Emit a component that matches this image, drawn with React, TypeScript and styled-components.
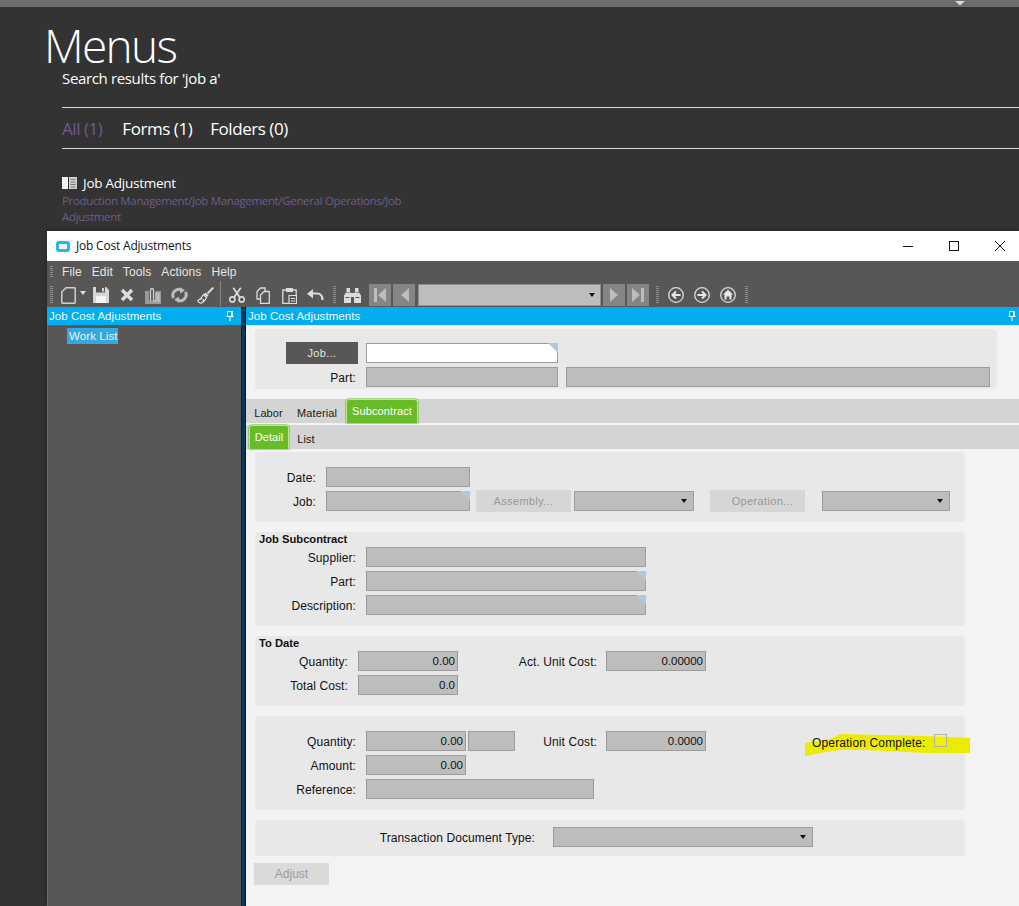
import React from 'react';
import styled, { createGlobalStyle } from 'styled-components';

const Global = createGlobalStyle`
  html, body { margin: 0; padding: 0; background: #333333; height: 906px; overflow: hidden; }
  #root { width: 1019px; height: 906px; overflow: hidden; }
`;

const Page = styled.div`
  width: 1019px; height: 906px; display: flex; flex-direction: column;
  background: #333333; font-family: "Open Sans", "Noto Sans", sans-serif; color: #fff; overflow: hidden;
`;
const TopBar = styled.div`height: 7px; background: #6b6e6e; flex: none; padding-left: 954px; box-sizing: border-box; line-height: 0;`;
const MenuPage = styled.div`height: 224px; flex: none; padding-left: 44px; box-sizing: border-box;`;
const Title = styled.h1`
  margin: 0; height: 61px; box-sizing: border-box; padding-top: 15px; font-size: 46px; line-height: 46px; font-weight: 300; letter-spacing: -1.7px;
`;
const Results = styled.div`padding-left: 18px;`;
const Subtitle = styled.div`font-size: 15px; line-height: 20px; height: 29px; letter-spacing: -0.35px;`;
const Filters = styled.div`
  margin-top: 10px; height: 42px; display: flex; gap: 20px; align-items: center; box-sizing: border-box;
  border-top: 1px solid #d9d9d9; border-bottom: 1px solid #d9d9d9;
  font-size: 17px; letter-spacing: -0.45px;
`;
const Filter = styled.span<{ $active?: boolean; $tight?: boolean }>`
  color: ${p => (p.$active ? '#6f5b8c' : '#fff')};
  margin-left: ${p => (p.$tight ? -2 : 0)}px;
`;
const Result = styled.div`margin-top: 24px; width: 345px;`;
const ResultName = styled.div`display: flex; align-items: center; gap: 6px; font-size: 13.5px; line-height: 20px; letter-spacing: -0.25px;`;
const ResultPath = styled.div`font-size: 11.5px; line-height: 16px; color: #6f5b8c; letter-spacing: -0.34px;`;

const Win = styled.div`
  margin-left: 47px; flex: 1; min-height: 0; display: flex; flex-direction: column;
  font-family: "Liberation Sans", Arial, sans-serif; font-size: 12px; color: #111;
  box-shadow: 0 0 7px rgba(0, 0, 0, 0.28);
`;
const TitleBar = styled.div`height: 30px; flex: none; background: #fff; display: flex; align-items: center; padding-left: 9px; margin-right: -4px;`;
const TitleText = styled.div`margin: -2px 0 0 6px; flex: 1; font-family: "Open Sans", sans-serif; font-size: 12px; letter-spacing: -0.2px; color: #111;`;
const WinButton = styled.div`width: 46px; height: 30px; display: flex; align-items: center; justify-content: center;`;
const MenuBar = styled.div`
  height: 22px; flex: none; background: #595755; display: flex; align-items: center; gap: 10px;
  color: #e6e6e6; padding-left: 3px;
`;
const Grip = styled.div<{ $h: number }>`
  width: 3px; height: ${p => p.$h}px; flex: none;
  background: repeating-linear-gradient(to bottom, #8f8d8b 0 1px, transparent 1px 2px);
`;
const MenuItem = styled.span<{ $first?: boolean }>`
  font-size: 12px; letter-spacing: 0.1px; margin-left: ${p => (p.$first ? -1 : 0)}px;
`;
const Toolbar = styled.div`height: 24px; flex: none; background: #595755; display: flex; align-items: center; padding-left: 3px;`;
const Tool = styled.div<{ $w?: number }>`
  width: ${p => p.$w ?? 26}px; height: 22px; flex: none; display: flex; align-items: center; justify-content: center;
`;
const Divider = styled.div`width: 1px; height: 25px; background: #8a8886; align-self: flex-start; margin-top: -2px; flex: none;`;
const Spacer = styled.div<{ $w: number }>`width: ${p => p.$w}px; flex: none;`;
const NavButton = styled.div`
  width: 22px; height: 22px; background: #868584; flex: none; display: flex; align-items: center; justify-content: center; margin-right: 2px;
`;
const NavCombo = styled.div`
  width: 183px; height: 22px; box-sizing: border-box; background: #bdbdbd; border: 1px solid #8f8f8f; flex: none;
  display: flex; align-items: center; justify-content: flex-end; padding-right: 5px; margin-right: 2px;
`;
const Arrow = styled.span<{ $light?: boolean }>`
  width: 0; height: 0; border-left: 3.5px solid transparent; border-right: 3.5px solid transparent;
  border-top: 4px solid ${p => (p.$light ? '#ddd' : '#111')}; display: block;
  margin-bottom: ${p => (p.$light ? 4 : 0)}px;
`;

const Dock = styled.div`flex: 1; min-height: 0; display: flex;`;
const LeftPane = styled.div`
  width: 194px; flex: none; display: flex; flex-direction: column;
  background: linear-gradient(to right, #6b6a68 0 1px, #595755 1px);
`;
const Gutter = styled.div`width: 5px; flex: none; background: linear-gradient(to right, #1c1c1c 0 1px, #063a5c 1px 4px, #0a0a0a 4px 5px);`;
const RightPane = styled.div`flex: 1; min-width: 0; background: #f3f3f6; display: flex; flex-direction: column;`;
const DockHeader = styled.div<{ $pr: number }>`
  height: 18px; flex: none; background: #00adef; color: #f4fbff; display: flex; align-items: center; justify-content: space-between;
  padding: 0 ${p => p.$pr}px 0 2px; font-size: 11.5px; letter-spacing: 0.05px;
`;
const WorkList = styled.div`margin: 3px 0 0 20px; background: #33a9e0; color: #f0f0f0; height: 16px; width: 51px; line-height: 16px; padding-left: 2px; box-sizing: border-box; font-size: 11.5px;letter-spacing: 0.1px; white-space: nowrap;`;

const Panel = styled.div<{ $w: number; $h: number; $top: number }>`
  width: ${p => p.$w}px; height: ${p => p.$h}px; margin: ${p => p.$top}px 0 0 9px; background: #e8e8e8;
  border-radius: 4px; box-sizing: border-box; flex: none; position: relative;
`;
const Strip = styled.div<{ $top: number }>`
  margin-top: ${p => p.$top}px; height: 24px; background: #d4d4d4; flex: none; display: flex; align-items: flex-end;
  padding-left: 3px;
`;
const Tab = styled.div<{ $active?: boolean; $w: number }>`
  width: ${p => p.$w}px; height: ${p => (p.$active ? 24 : 22)}px; box-sizing: border-box; display: flex; align-items: ${p => (p.$active ? 'flex-start' : 'center')}; justify-content: center;
  font-size: 11px; letter-spacing: 0.1px; padding-top: ${p => (p.$active ? 5 : 2)}px;
  color: ${p => (p.$active ? '#fff' : '#1a1a1a')};
  background: ${p => (p.$active ? '#68bc28' : 'transparent')};
  ${p => (p.$active ? 'border: 1px solid #b8ea8e; border-bottom: none; border-radius: 3px 3px 0 0; box-shadow: 0 0 0 0.5px #5fb521;' : '')}
`;
const Row = styled.div<{ $top: number }>`
  display: flex; align-items: center; height: 20px; margin-top: ${p => p.$top}px;
`;
const Label = styled.div<{ $w: number }>`
  width: ${p => p.$w}px; flex: none; text-align: right; padding: 2px 3px 0 0; box-sizing: border-box; color: #111; white-space: nowrap; letter-spacing: 0.1px;
`;
const Field = styled.div<{ $w: number; $white?: boolean; $corner?: boolean; $left?: number }>`
  width: ${p => p.$w}px; height: 20px; flex: none; box-sizing: border-box; margin-left: ${p => p.$left ?? 0}px;
  background: ${p => (p.$white ? '#fff' : '#bdbdbd')}; border: 1px solid #9c9c9c; position: relative;
  display: flex; align-items: center; justify-content: flex-end; padding: 0 2px 1px 0; font-size: 11.5px; color: #111;
  ${p => (p.$corner ? `&::after { content: ''; position: absolute; right: -1px; top: -1px; border-style: solid; border-width: 0 10px 10px 0; border-color: transparent #b1c6df transparent transparent; }` : '')}
`;
const Combo = styled(Field)`padding: 0 6px 0 0;`;
const Btn = styled.div<{ $w: number; $dark?: boolean; $left?: number; $shift?: number }>`
  width: ${p => p.$w}px; height: 22px; flex: none; margin-left: ${p => p.$left ?? 0}px; box-sizing: border-box;
  padding-left: ${p => p.$shift ?? 0}px;
  display: flex; align-items: center; justify-content: center; font-size: 11px; letter-spacing: 0.35px;
  background: ${p => (p.$dark ? '#595755' : '#d6d6d6')}; color: ${p => (p.$dark ? '#e4e4e4' : '#969696')};
`;
const Heading = styled.div`font-weight: bold; font-size: 11.2px; padding-left: 4px; color: #111; height: 15px; line-height: 14px;`;
const Highlight = styled.svg`position: absolute; left: 550px; top: 17px;`;
const OpLabel = styled.div`position: absolute; left: 557px; top: 20px; color: #111; white-space: nowrap; letter-spacing: 0.15px;`;
const Check = styled.div`position: absolute; left: 679px; top: 18px; width: 13px; height: 13px; box-sizing: border-box; border: 1px solid #b4b4a8; background: rgba(255, 255, 0, 0.35);`;
const AdjustBtn = styled(Btn)`margin: 7px 0 0 8px; background: #dadada; color: #9a9a9a; font-size: 12px; letter-spacing: 0;`;

const S = { fill: 'none', stroke: '#dcdcdc' };
const Icon: React.FC<{ children: React.ReactNode; w?: number; h?: number }> = ({ children, w = 18, h = 18 }) => (
  <svg width={w} height={h} viewBox={`0 0 ${w} ${h}`}>{children}</svg>
);

const Pin = () => (
  <svg width="8" height="10" viewBox="0 0 8 10">
    <path d="M1.5 .5h5v5h-5z M.5 5.500h7 M4 6v4" fill="none" stroke="#fff" strokeWidth="1" />
    <path d="M5 1h1.500v4.500H5z" fill="#fff" />
  </svg>
);

export default function App() {
  return (
    <Page>
      <Global />
      <TopBar>
        <svg width="12" height="5" viewBox="0 0 12 5"><path d="M1 0h10L6 4.500z" fill="#d8d8d8" /></svg>
      </TopBar>
      <MenuPage>
        <Title>Menus</Title>
        <Results>
          <Subtitle>Search results for 'job a'</Subtitle>
          <Filters>
            <Filter $active>All (1)</Filter>
            <Filter>Forms (1)</Filter>
            <Filter $tight>Folders (0)</Filter>
          </Filters>
          <Result>
            <ResultName>
              <svg width="15" height="12" viewBox="0 0 15 12">
                <path d="M0 0h6v12H0z" fill="#f2f2f2" />
                <path d="M7 0h8v12H7z" fill="#d0d0d0" />
                <path d="M8.500 2.500h5M8.500 5h5M8.500 7.500h5M8.500 10h5" stroke="#777" strokeWidth="1" />
              </svg>
              Job Adjustment
            </ResultName>
            <ResultPath>Production Management/Job Management/General Operations/Job Adjustment</ResultPath>
          </Result>
        </Results>
      </MenuPage>
      <Win>
        <TitleBar>
          <svg width="14" height="11" viewBox="0 0 14 11">
            <rect x="0" y="0" width="14" height="11" rx="3" fill="#29b6ea" />
            <rect x="3" y="3" width="8" height="5" rx="1" fill="#fff" />
          </svg>
          <TitleText>Job Cost Adjustments</TitleText>
          <WinButton>
            <svg width="10" height="10" viewBox="0 0 10 10"><path d="M0 5.500h10" stroke="#111" /></svg>
          </WinButton>
          <WinButton>
            <svg width="10" height="10" viewBox="0 0 10 10"><rect x=".5" y=".5" width="9" height="9" fill="none" stroke="#111" /></svg>
          </WinButton>
          <WinButton>
            <svg width="10" height="10" viewBox="0 0 10 10"><path d="M0 0l10 10M10 0L0 10" stroke="#111" /></svg>
          </WinButton>
        </TitleBar>
        <MenuBar>
          <Grip $h={12} />
          <MenuItem $first>File</MenuItem>
          <MenuItem>Edit</MenuItem>
          <MenuItem>Tools</MenuItem>
          <MenuItem>Actions</MenuItem>
          <MenuItem>Help</MenuItem>
        </MenuBar>
        <Toolbar>
          <Grip $h={18} />
          <Spacer $w={7} />
          <Tool $w={17}>
            <Icon w={15} h={17}>
              <path d="M5 .8h8.500a.7.7 0 0 1 .7.7v14a.7.7 0 0 1-.7.7H1.500a.7.7 0 0 1-.7-.7V5z" {...S} stroke="#cfcfcf" strokeWidth="1.500" />
            </Icon>
          </Tool>
          <Tool $w={11}><Arrow $light /></Tool>
          <Tool>
            <Icon w={16} h={16}>
              <path d="M0 0h13l3 3v13H0z" fill="#d6d6d6" />
              <path d="M3 0h9v5.500H3z" fill="#595755" />
              <path d="M9 1h2v3.500H9z" fill="#d6d6d6" />
              <path d="M3 9h10v7H3z" fill="#f4f4f4" />
            </Icon>
          </Tool>
          <Tool>
            <Icon w={14} h={14}><path d="M2 2l10 10M12 2L2 12" stroke="#dcdcdc" strokeWidth="3.400" /></Icon>
          </Tool>
          <Tool>
            <Icon w={16} h={17}>
              <path d="M0 4h16v13H0z" fill="#9a9a98" />
              <path d="M4 1.500h7v12H4z" fill="#595755" />
              <path d="M5.500 14V3a1.500 1.500 0 0 1 3 0v10a1.200 1.200 0 0 0 2.500 0V5" fill="none" stroke="#cfcfcf" strokeWidth="1.300" />
              <path d="M12.500 6h2v9h-2z" fill="#c4c4c4" />
            </Icon>
          </Tool>
          <Tool>
            <Icon w={17} h={16}>
              <path d="M2.500 11A6 6 0 0 1 10 2.700" fill="none" stroke="#bcbcbc" strokeWidth="3" />
              <path d="M14.500 5A6 6 0 0 1 7 13.300" fill="none" stroke="#bcbcbc" strokeWidth="3" />
              <path d="M9 0l5 3.500-5 3z M8 16l-5-3.500 5-3z" fill="#bcbcbc" />
            </Icon>
          </Tool>
          <Tool>
            <Icon w={17} h={17}>
              <path d="M16.300 .7L10.500 6.500" stroke="#e4e4e4" strokeWidth="1.800" />
              <path d="M8.500 5.500l3 3-1.500 1.500-3-3z" fill="#e4e4e4" />
              <path d="M6.500 7.500l3 3C8.500 13 6 15.500 3.500 16.300 2.300 15.800 1 14.500.7 13.500 3 12.500 5.200 10 6.500 7.500z M3.500 12.500l1.500-1.500M5.500 14l1.500-1.500" fill="none" stroke="#e4e4e4" strokeWidth="1.100" />
            </Icon>
          </Tool>
          <Spacer $w={2} />
          <Divider />
          <Spacer $w={3} />
          <Tool>
            <Icon w={16} h={16}>
              <circle cx="3.300" cy="12.500" r="2.600" {...S} strokeWidth="1.600" />
              <circle cx="12.700" cy="12.500" r="2.600" {...S} strokeWidth="1.600" />
              <path d="M5 10.500L11.800.7M11 10.500L4.200.7" {...S} strokeWidth="1.700" />
            </Icon>
          </Tool>
          <Tool>
            <Icon w={14} h={17}>
              <path d="M5 12H1V4.500L4.500 1H9v3" {...S} strokeWidth="1.300" />
              <path d="M8 4.500h5.300v11.800H4.500V8z" fill="#595755" stroke="#dcdcdc" strokeWidth="1.300" />
            </Icon>
          </Tool>
          <Tool>
            <Icon w={15} h={17}>
              <path d="M4 3H.8v13.300h6M11 3h3.200v5" {...S} strokeWidth="1.300" />
              <path d="M4 1h7v4H4z" fill="#dcdcdc" />
              <path d="M7 8.500h7.500v8H7z" fill="#595755" stroke="#dcdcdc" strokeWidth="1.200" />
              <path d="M9 11.500h4M9 14h4" stroke="#dcdcdc" />
            </Icon>
          </Tool>
          <Tool>
            <Icon w={17} h={12}>
              <path d="M2 4.500h8c3.500 0 5.500 2.500 5.500 6.500" {...S} strokeWidth="2.200" />
              <path d="M6 0v9.500L0 4.700z" fill="#dcdcdc" />
            </Icon>
          </Tool>
          <Spacer $w={5} />
          <Grip $h={18} />
          <Spacer $w={3} />
          <Tool>
            <Icon w={17} h={15}>
              <path d="M0 7.500l2-3h5v10.500H0z M17 7.500l-2-3h-5v10.500h7z M2.500 0h3.500v4H2.500z M11 0h3.500v4H11z M7 5h3v4H7z" fill="#dcdcdc" />
              <path d="M1.500 9.500h4M11.500 9.500h4" stroke="#595755" />
            </Icon>
          </Tool>
          <Spacer $w={4} />
          <NavButton>
            <svg width="14" height="14" viewBox="0 0 14 14"><path d="M1 0h3v14H1z M13 0v14L5 7z" fill="#bdbdbd" /></svg>
          </NavButton>
          <NavButton>
            <svg width="12" height="14" viewBox="0 0 12 14"><path d="M11 0v14L3 7z" fill="#bdbdbd" /></svg>
          </NavButton>
          <Spacer $w={1} />
          <NavCombo><Arrow /></NavCombo>
          <NavButton>
            <svg width="12" height="14" viewBox="0 0 12 14"><path d="M2 0v14l8-7z" fill="#bdbdbd" /></svg>
          </NavButton>
          <NavButton>
            <svg width="14" height="14" viewBox="0 0 14 14"><path d="M1 0v14l8-7z M10 0h3v14h-3z" fill="#bdbdbd" /></svg>
          </NavButton>
          <Spacer $w={5} />
          <Grip $h={18} />
          <Spacer $w={4} />
          <Tool>
            <Icon w={16} h={16}>
              <circle cx="8" cy="8" r="7.300" {...S} strokeWidth="1.300" />
              <path d="M12.500 8H5M8 4.500L4.500 8 8 11.500" {...S} stroke="#e8e8e8" strokeWidth="2" />
            </Icon>
          </Tool>
          <Tool>
            <Icon w={16} h={16}>
              <circle cx="8" cy="8" r="7.300" {...S} strokeWidth="1.300" />
              <path d="M3.500 8H11M8 4.500L11.500 8 8 11.500" {...S} stroke="#e8e8e8" strokeWidth="2" />
            </Icon>
          </Tool>
          <Tool>
            <Icon w={16} h={16}>
              <circle cx="8" cy="8" r="7.300" {...S} strokeWidth="1.300" />
              <path d="M8 2.800L13 7.500h-1.500V12.500H9.500V9.500h-3v3H4.500V7.500H3z" fill="#e8e8e8" />
            </Icon>
          </Tool>
          <Spacer $w={4} />
          <Grip $h={18} />
        </Toolbar>
        <Dock>
          <LeftPane>
            <DockHeader $pr={7}>Job Cost Adjustments<Pin /></DockHeader>
            <WorkList>Work List</WorkList>
          </LeftPane>
          <Gutter />
          <RightPane>
            <DockHeader $pr={3}>Job Cost Adjustments<Pin /></DockHeader>
            <Panel $w={742} $h={60} $top={4}>
              <Row $top={14}>
                <Spacer $w={31} />
                <Btn $w={72} $dark>Job...</Btn>
                <Field $w={192} $white $corner $left={8} />
              </Row>
              <Row $top={4}>
                <Label $w={104}>Part:</Label>
                <Spacer $w={7} />
                <Field $w={192} />
                <Field $w={424} $left={8} />
              </Row>
            </Panel>
            <Strip $top={10}>
              <Tab $w={39}>Labor</Tab>
              <Tab $w={58}>Material</Tab>
              <Tab $w={72} $active>Subcontract</Tab>
            </Strip>
            <Strip $top={2}>
              <Tab $w={40} $active>Detail</Tab>
              <Tab $w={34}>List</Tab>
            </Strip>
            <Panel $w={710} $h={70} $top={3}>
              <Row $top={15}>
                <Label $w={64}>Date:</Label>
                <Spacer $w={7} />
                <Field $w={144} />
              </Row>
              <Row $top={4}>
                <Label $w={64}>Job:</Label>
                <Spacer $w={7} />
                <Field $w={144} $corner />
                <Btn $w={95} $left={6}>Assembly...</Btn>
                <Combo $w={120} $left={3}><Arrow /></Combo>
                <Btn $w={95} $left={16} $shift={10}>Operation...</Btn>
                <Combo $w={128} $left={17}><Arrow /></Combo>
              </Row>
            </Panel>
            <Panel $w={710} $h={94} $top={10}>
              <Heading>Job Subcontract</Heading>
              <Row $top={0}>
                <Label $w={104}>Supplier:</Label>
                <Spacer $w={7} />
                <Field $w={280} />
              </Row>
              <Row $top={4}>
                <Label $w={104}>Part:</Label>
                <Spacer $w={7} />
                <Field $w={280} $corner />
              </Row>
              <Row $top={4}>
                <Label $w={104}>Description:</Label>
                <Spacer $w={7} />
                <Field $w={280} $corner />
              </Row>
            </Panel>
            <Panel $w={710} $h={70} $top={10}>
              <Heading>To Date</Heading>
              <Row $top={0}>
                <Label $w={96}>Quantity:</Label>
                <Spacer $w={7} />
                <Field $w={100}>0.00</Field>
                <Label $w={142}>Act. Unit Cost:</Label>
                <Spacer $w={6} />
                <Field $w={100}>0.00000</Field>
              </Row>
              <Row $top={4}>
                <Label $w={96}>Total Cost:</Label>
                <Spacer $w={7} />
                <Field $w={100}>0.0</Field>
              </Row>
            </Panel>
            <Panel $w={710} $h={94} $top={10}>
              <Row $top={15}>
                <Label $w={104}>Quantity:</Label>
                <Spacer $w={7} />
                <Field $w={100}>0.00</Field>
                <Field $w={47} $left={2} />
                <Label $w={85}>Unit Cost:</Label>
                <Spacer $w={6} />
                <Field $w={100}>0.0000</Field>
              </Row>
              <Row $top={4}>
                <Label $w={104}>Amount:</Label>
                <Spacer $w={7} />
                <Field $w={100}>0.00</Field>
              </Row>
              <Row $top={4}>
                <Label $w={104}>Reference:</Label>
                <Spacer $w={7} />
                <Field $w={228} />
              </Row>
              <Highlight width="166" height="26" viewBox="0 0 166 26">
                <path d="M0 10 L25 6 L35 1 L120 3 L165 5 L165 20 L120 20 L60 17 L35 17 L15 20 L0 23 Z" fill="#ecec00" />
              </Highlight>
              <OpLabel>Operation Complete:</OpLabel>
              <Check />
            </Panel>
            <Panel $w={710} $h={36} $top={10}>
              <Row $top={7}>
                <Label $w={283}>Transaction Document Type:</Label>
                <Spacer $w={15} />
                <Combo $w={260}><Arrow /></Combo>
              </Row>
            </Panel>
            <AdjustBtn $w={75}>Adjust</AdjustBtn>
          </RightPane>
        </Dock>
      </Win>
    </Page>
  );
}
